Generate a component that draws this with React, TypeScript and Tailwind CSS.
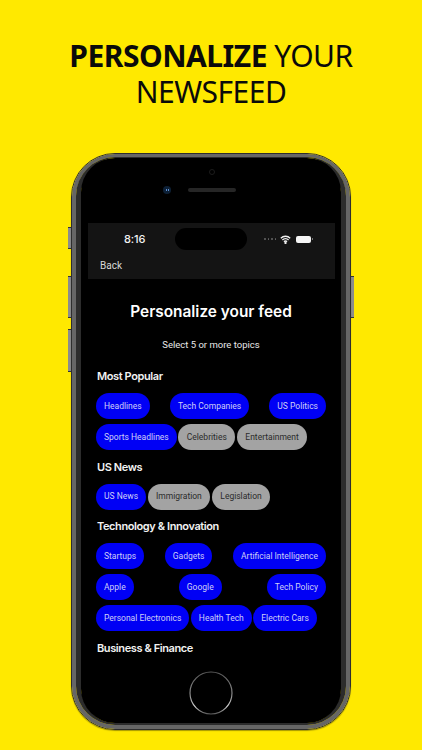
import type { ReactNode } from "react";

const sans = "font-['Inter','Liberation_Sans',sans-serif]";

type Topic = { label: string; on?: boolean };

function Chip({ label, on }: Topic) {
  return (
    <div
      className={`flex h-[26px] items-center rounded-[13px] font-['Roboto',sans-serif] text-[8.5px] whitespace-nowrap ${
        on ? "bg-[#0000f5] px-[8px] text-[#cfcff5]" : "bg-[#a3a3a3] px-[8.5px] text-[#2b2b2b]"
      }`}
    >
      {label}
    </div>
  );
}

function Row({ topics, spread }: { topics: Topic[]; spread?: boolean }) {
  return (
    <div className={`flex ${spread ? "justify-between" : "gap-[1.5px]"}`}>
      {topics.map((t) => (
        <Chip key={t.label} {...t} />
      ))}
    </div>
  );
}

function Section({ title, children }: { title: string; children?: ReactNode }) {
  return (
    <div>
      <h2 className="pl-[1px] text-[11px] leading-[14px] font-semibold tracking-[-0.4px] text-[#f2f2f2]">{title}</h2>
      <div className="mt-[10px] flex flex-col gap-[5px]">{children}</div>
    </div>
  );
}

function StatusIcons() {
  return (
    <div className="flex items-center gap-[4px]">
      <div className="flex gap-[2px]">
        {[0, 1, 2, 3].map((i) => (
          <div key={i} className="h-[1.5px] w-[1.5px] rounded-full bg-[#666666]" />
        ))}
      </div>
      <svg width="11" height="9" viewBox="0 0 11 9" fill="none" stroke="#f2f2f2" strokeWidth="1.3">
        <path d="M.8 3.2a6.6 6.6 0 0 1 9.4 0" />
        <path d="M2.4 5a4.3 4.3 0 0 1 6.2 0" />
        <path d="M4 6.7a2 2 0 0 1 3 0" />
        <circle cx="5.5" cy="8" r=".5" fill="#f2f2f2" />
      </svg>
      <div className="ml-[1px] flex items-center">
        <div className="h-[7px] w-[15px] rounded-[2px] bg-[#f5f5f5]" />
        <div className="ml-[1px] h-[2px] w-[1px] bg-[#777777]" />
      </div>
    </div>
  );
}

function HomeButton() {
  return (
    <svg className="absolute top-[518px] left-[118px]" width="44" height="44" viewBox="0 0 44 44" fill="none">
      <defs>
        <linearGradient id="ring" x1="0" y1="0" x2="0" y2="1">
          <stop offset="0" stopColor="#5a5a5a" />
          <stop offset="0.55" stopColor="#8a8a8a" />
          <stop offset="0.82" stopColor="#d0d0d0" />
          <stop offset="1" stopColor="#5a5a5a" />
        </linearGradient>
      </defs>
      <circle cx="22" cy="22" r="21" stroke="url(#ring)" strokeWidth="1.2" />
    </svg>
  );
}

const sideButton = "absolute w-[4px] border-y border-[#333333] bg-[#8c8c8c]";

export default function App() {
  return (
    <div className={`flex h-[750px] w-[422px] flex-col items-center overflow-hidden bg-[#ffe900] ${sans}`}>
      <div className="mt-[38px] text-center font-['Noto_Sans',sans-serif] text-[30px] leading-[36px] tracking-[-0.5px] text-[#0a0a0a]">
        <div>
          <span className="font-bold">PERSONALIZE</span> YOUR
        </div>
        <div>NEWSFEED</div>
      </div>

      <div className="relative mt-[43px] h-[577px] w-[280px] shrink-0">
        <div className={`${sideButton} top-[74px] left-[-3px] h-[22px]`} />
        <div className={`${sideButton} top-[123px] left-[-3px] h-[42px]`} />
        <div className={`${sideButton} top-[176px] left-[-3px] h-[43px]`} />
        <div className={`${sideButton} top-[123px] right-[-3px] h-[42px]`} />

        <div className="relative h-full rounded-[44px] border border-[#2e2e2e] shadow-[0_1px_1px_rgba(0,0,0,0.35)]">
          <div className="h-full rounded-[43px] border-x-[4px] border-t-[3px] border-b-[4px] border-[#666666]">
            <div className="h-full rounded-[39px] border-x-[5px] border-t-[1px] border-b-[2px] border-[#2c2c2c]">
              <div className="flex h-full flex-col rounded-[34px] bg-black pr-[6px] pl-[7px]">
                {/* earpiece area */}
                <div className="relative h-[65px] shrink-0">
                  <div className="absolute top-[11px] left-1/2 h-[6px] w-[6px] -translate-x-1/2 rounded-full border border-[#1c1c1c]" />
                  <div className="absolute top-[30px] left-1/2 h-[4px] w-[48px] -translate-x-1/2 rounded-full bg-[#262626]" />
                  <div className="absolute top-[28px] left-[75px] flex h-[8px] w-[8px] items-center justify-center gap-[1px] rounded-full bg-[#0d2036]">
                    <div className="h-[2px] w-[1px] bg-[#5d8fd0]" />
                    <div className="h-[2px] w-[1px] bg-[#5d8fd0]" />
                  </div>
                </div>

                {/* nav bar */}
                <div className="relative h-[56px] w-[247px] shrink-0 bg-[#141414]">
                  <div className="flex h-[32px] items-center justify-between pr-[22px] pl-[36px]">
                    <span className="text-[11px] font-medium tracking-[-0.1px] text-[#f2f2f2]">8:16</span>
                    <StatusIcons />
                  </div>
                  <div className="absolute top-[5px] left-[87px] h-[22px] w-[72px] rounded-full bg-black" />
                  <div className="mt-[4px] pl-[12px] font-['Roboto',sans-serif] text-[10px] leading-[14px] text-[#d8d8d8]">Back</div>
                </div>

                {/* content */}
                <div className="w-[247px] pr-[9px] pl-[8px]">
                  <h1 className="mt-[24px] text-center text-[15.4px] leading-[18px] font-semibold text-white">
                    Personalize your feed
                  </h1>
                  <p className="mt-[18px] text-center font-['Roboto',sans-serif] text-[9.5px] leading-[12px] text-[#e8e8e8]">
                    Select 5 or more topics
                  </p>
                  <div className="mt-[18px] flex flex-col gap-[9.5px]">
                    <Section title="Most Popular">
                      <Row
                        spread
                        topics={[
                          { label: "Headlines", on: true },
                          { label: "Tech Companies", on: true },
                          { label: "US Politics", on: true },
                        ]}
                      />
                      <Row
                        topics={[
                          { label: "Sports Headlines", on: true },
                          { label: "Celebrities" },
                          { label: "Entertainment" },
                        ]}
                      />
                    </Section>
                    <Section title="US News">
                      <Row
                        topics={[
                          { label: "US News", on: true },
                          { label: "Immigration" },
                          { label: "Legislation" },
                        ]}
                      />
                    </Section>
                    <Section title="Technology & Innovation">
                      <Row
                        spread
                        topics={[
                          { label: "Startups", on: true },
                          { label: "Gadgets", on: true },
                          { label: "Artificial Intelligence", on: true },
                        ]}
                      />
                      <Row
                        spread
                        topics={[
                          { label: "Apple", on: true },
                          { label: "Google", on: true },
                          { label: "Tech Policy", on: true },
                        ]}
                      />
                      <Row
                        topics={[
                          { label: "Personal Electronics", on: true },
                          { label: "Health Tech", on: true },
                          { label: "Electric Cars", on: true },
                        ]}
                      />
                    </Section>
                    <Section title="Business & Finance" />
                  </div>
                </div>
              </div>
            </div>
          </div>
        </div>

        <HomeButton />
      </div>
    </div>
  );
}
